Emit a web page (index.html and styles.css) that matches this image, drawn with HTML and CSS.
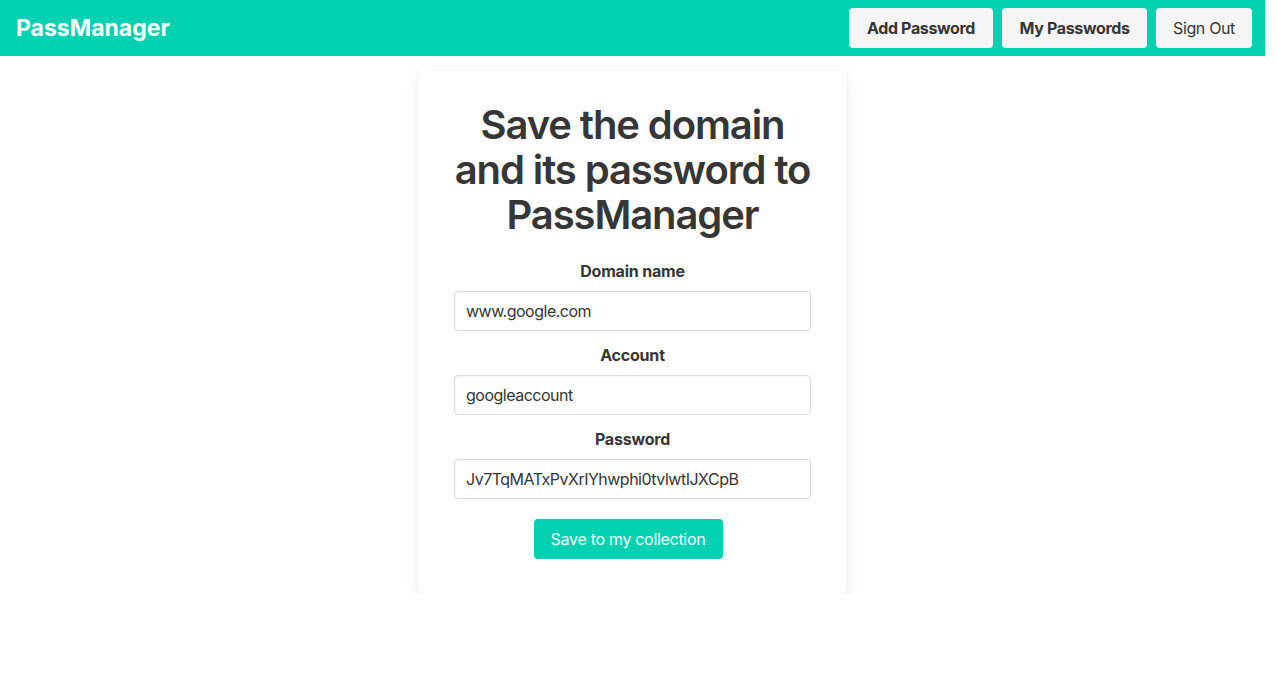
FILE: index.html
```html
<!DOCTYPE html>
<html lang="en">
<head>
<meta charset="utf-8">
<title>PassManager</title>
<link rel="stylesheet" href="styles.css">
</head>
<body>
<div class="page">
  <nav class="navbar">
    <div class="brand">PassManager</div>
    <div class="nav-buttons">
      <button class="btn btn-light bold">Add Password</button>
      <button class="btn btn-light bold">My Passwords</button>
      <button class="btn btn-light">Sign Out</button>
    </div>
  </nav>
  <main class="main">
    <form class="card">
      <h1 class="title">Save the domain and its password to PassManager</h1>
      <div class="field">
        <label class="label">Domain name</label>
        <input class="input" type="text" value="www.google.com">
      </div>
      <div class="field">
        <label class="label">Account</label>
        <input class="input" type="text" value="googleaccount">
      </div>
      <div class="field">
        <label class="label">Password</label>
        <input class="input" type="text" value="Jv7TqMATxPvXrIYhwphi0tvlwtIJXCpB">
      </div>
      <div class="actions">
        <button type="button" class="btn btn-primary">Save to my collection</button>
      </div>
    </form>
  </main>
</div>
</body>
</html>
```
FILE: styles.css
```css
* { box-sizing: border-box; }
html, body { margin: 0; padding: 0; background: #fff; }
body {
  font-family: Inter, "Noto Sans", "Liberation Sans", sans-serif;
  color: #363636;
  font-size: 16px;
  line-height: 1.5;
}
.page { width: 1265px; }
.navbar {
  height: 56px;
  background: #00d1b2;
  display: flex;
  align-items: center;
  justify-content: space-between;
  padding: 0 13px 0 16px;
}
.brand {
  color: #fff;
  font-weight: 700;
  font-size: 23px;
  letter-spacing: 0;
}
.nav-buttons { display: flex; gap: 9px; }
.btn {
  font-family: inherit;
  font-size: 16px;
  height: 40px;
  border-radius: 4px;
  border: 1px solid transparent;
  padding: 0;
  cursor: pointer;
  line-height: 1.5;
  white-space: nowrap;
  letter-spacing: -0.35px;
}
.btn-light { background: #f5f5f5; color: #363636; }
.btn.bold { font-weight: 700; }
.nav-buttons .btn:nth-child(1) { width: 144px; }
.nav-buttons .btn:nth-child(2) { width: 145px; }
.nav-buttons .btn:nth-child(3) { width: 96px; }
.main { display: flex; justify-content: center; padding-top: 10px; }
.card {
  width: 429px;
  background: #fff;
  border-radius: 6px;
  box-shadow: 0 8px 16px -2px rgba(10,10,10,0.1), 0 0 0 1px rgba(10,10,10,0.02);
  padding: 36px 36px 35px;
}
.title {
  margin: 0 -10px 22px;
  font-size: 40px;
  line-height: 45px;
  font-weight: 600;
  text-align: center;
  color: #363636;
  letter-spacing: -1.1px;
}
.field { display: flex; flex-direction: column; margin-bottom: 12px; }
.label {
  font-weight: 700;
  text-align: center;
  margin-bottom: 8px;
  color: #363636;
  letter-spacing: -0.2px;
}
.input {
  height: 40px;
  border: 1px solid #dbdbdb;
  border-radius: 4px;
  padding: 0 11px;
  font-family: inherit;
  font-size: 16px;
  color: #363636;
  letter-spacing: -0.5px;
  box-shadow: inset 0 1px 2px rgba(10,10,10,0.05);
  outline: none;
}
.actions { display: flex; justify-content: center; padding-top: 8px; padding-right: 9px; }
.btn-primary { background: #00d1b2; color: #fff; width: 189px; letter-spacing: -0.3px; }
```
